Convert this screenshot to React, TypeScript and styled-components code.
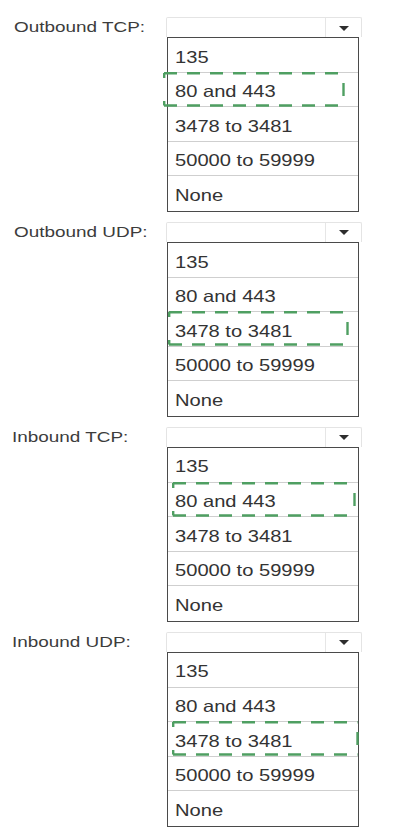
import React from "react";
import styled, { createGlobalStyle } from "styled-components";

const Global = createGlobalStyle`
  html, body { margin: 0; padding: 0; background: #ffffff; }
  body { font-family: "Liberation Sans", Arial, sans-serif; }
`;

const Page = styled.div`
  display: flex;
  flex-direction: column;
  gap: 10px;
  padding-top: 17px;
`;

const Block = styled.div<{ $labelLeft: number }>`
  display: grid;
  grid-template-columns: ${(p) => 166 - p.$labelLeft}px 196px;
  grid-template-rows: 20px auto;
  padding-left: ${(p) => p.$labelLeft}px;
`;

const Label = styled.div`
  grid-column: 1;
  grid-row: 1;
  align-self: center;
  font-size: 15.5px;
  color: #3c3c3c;
  white-space: nowrap;
  line-height: 1;
`;

const Stretch = styled.span`
  display: inline-block;
  transform: scaleX(1.22);
  transform-origin: left center;
`;

const SelectBox = styled.div`
  grid-column: 2;
  grid-row: 1;
  box-sizing: border-box;
  height: 20px;
  border: 1px solid #e4e4e4;
  border-bottom: none;
  border-radius: 2px 2px 0 0;
  display: flex;
  justify-content: flex-end;
`;

const ArrowCell = styled.div`
  width: 35px;
  border-left: 1px solid #e6e6e6;
  display: flex;
  align-items: center;
  justify-content: center;
`;

const Arrow = styled.div`
  width: 0;
  height: 0;
  border-left: 5px solid transparent;
  border-right: 5px solid transparent;
  border-top: 5.5px solid #2e2e2e;
  margin-top: 1px;
`;

const List = styled.div`
  grid-column: 2;
  grid-row: 2;
  width: 192px;
  margin-left: 1px;
  box-sizing: border-box;
  border: 1.5px solid #4a4a4a;
  display: flex;
  flex-direction: column;
  background: #fff;
`;

const Row = styled.div<{ $last?: boolean }>`
  position: relative;
  height: 34.6px;
  box-sizing: border-box;
  padding: 4px 0 0 7px;
  display: flex;
  align-items: center;
  border-bottom: ${(p) => (p.$last ? "none" : "1px solid #cfcfcf")};
  font-size: 16.5px;
  color: #333333;
  line-height: 1;
`;

const Highlight = styled.svg<{ $left: number; $width: number }>`
  position: absolute;
  left: ${(p) => p.$left}px;
  top: -1px;
  width: ${(p) => p.$width}px;
  height: 35px;
  overflow: visible;
  pointer-events: none;
`;

const OPTIONS = ["135", "80 and 443", "3478 to 3481", "50000 to 59999", "None"];

type BlockDef = {
  label: string;
  selected: number;
  labelLeft: number;
  hlLeft: number;
  hlWidth: number;
};

const BLOCKS: BlockDef[] = [
  { label: "Outbound TCP:", selected: 1, labelLeft: 14, hlLeft: -5, hlWidth: 182 },
  { label: "Outbound UDP:", selected: 2, labelLeft: 14, hlLeft: 0, hlWidth: 181 },
  { label: "Inbound TCP:", selected: 1, labelLeft: 12, hlLeft: 4, hlWidth: 184 },
  { label: "Inbound UDP:", selected: 2, labelLeft: 12, hlLeft: 4, hlWidth: 187 },
];

const GREEN = "#4f9f62";

function DashedBox({ left, width }: { left: number; width: number }) {
  const r = width - 1.5;
  return (
    <Highlight $left={left} $width={width} viewBox={`0 0 ${width} 35`}>
      <g stroke={GREEN} strokeWidth={2.4} fill="none">
        <line x1={1} y1={1.2} x2={r} y2={1.2} strokeDasharray="13 10" />
        <line x1={1} y1={33.5} x2={r} y2={33.5} strokeDasharray="13 10" />
        <line x1={1.2} y1={1} x2={1.2} y2={6} />
        <line x1={1.2} y1={29} x2={1.2} y2={33.5} />
        <line x1={r} y1={11} x2={r} y2={24} />
      </g>
    </Highlight>
  );
}

export default function App() {
  return (
    <>
      <Global />
      <Page>
        {BLOCKS.map((b) => (
          <Block key={b.label} $labelLeft={b.labelLeft}>
            <Label>
              <Stretch>{b.label}</Stretch>
            </Label>
            <SelectBox>
              <ArrowCell>
                <Arrow />
              </ArrowCell>
            </SelectBox>
            <List>
              {OPTIONS.map((o, i) => (
                <Row key={o} $last={i === OPTIONS.length - 1}>
                  <Stretch>{o}</Stretch>
                  {i === b.selected && <DashedBox left={b.hlLeft} width={b.hlWidth} />}
                </Row>
              ))}
            </List>
          </Block>
        ))}
      </Page>
    </>
  );
}
